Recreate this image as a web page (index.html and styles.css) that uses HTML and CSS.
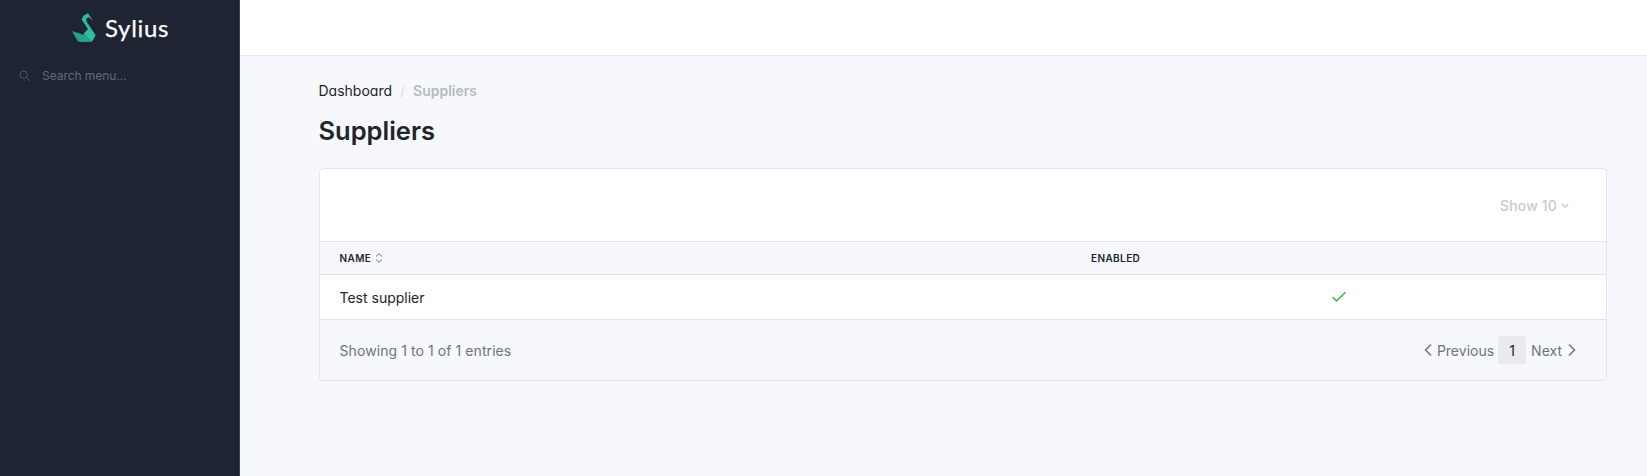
FILE: index.html
```
<!DOCTYPE html>
<html lang="en">
<head>
<meta charset="utf-8">
<title>Suppliers</title>
<link rel="stylesheet" href="styles.css">
</head>
<body>
<div class="page">
  <aside class="sidebar">
    <a class="logo">
      <svg class="swan" width="25" height="30" viewBox="36 25 75 90">
        <path fill="#2fbd9c" d="M65 45L70 33L84 26L99 49L86 37L78 43L80 51L107 92L96 111L70 88L84 73Z"/>
        <path fill="#25997f" d="M36 79L70 90L96 111H55L45 97Z"/>
        <path fill="#20a987" d="M45 84L76 93L96 111H62Z"/>
      </svg>
      <span class="brand">Sylius</span>
    </a>
    <div class="search">
      <svg width="12" height="12" viewBox="0 0 12 12" fill="none" stroke="currentColor"><circle cx="4.7" cy="4.7" r="3.7"/><path d="M7.5 7.5L11 11"/></svg>
      <span>Search menu...</span>
    </div>
  </aside>
  <div class="main">
    <header class="topbar"></header>
    <main class="content">
      <nav class="breadcrumb"><span>Dashboard</span><span class="slash">/</span><span class="current">Suppliers</span></nav>
      <h1 class="title">Suppliers</h1>
      <section class="card">
        <div class="toolbar"><span>Show 10</span><svg width="8" height="6" viewBox="0 0 8 6" fill="none" stroke="currentColor" stroke-width="1.3"><path d="M.8 1L4 4.2L7.2 1"/></svg></div>
        <div class="row head">
          <div class="name">Name <svg width="8" height="10" viewBox="0 0 8 10" fill="none" stroke="currentColor"><path d="M1 3.5L4 .7L7 3.5M1 6.5L4 9.3L7 6.5"/></svg></div>
          <div>Enabled</div>
        </div>
        <div class="row item">
          <div>Test supplier</div>
          <div class="check"><svg width="16" height="12" viewBox="0 0 16 12" fill="none" stroke="currentColor" stroke-width="1.3"><path d="M1.5 6L5.5 10L14.5 1.3"/></svg></div>
        </div>
        <footer class="footer">
          <span class="summary">Showing 1 to 1 of 1 entries</span>
          <div class="pager">
            <svg width="8" height="14" viewBox="0 0 8 14" fill="none" stroke="currentColor" stroke-width="1.5"><path d="M7 1.5L1.5 7L7 12.5"/></svg>
            <span class="prev">Previous</span><span class="active">1</span><span class="next">Next</span>
            <svg width="8" height="14" viewBox="0 0 8 14" fill="none" stroke="currentColor" stroke-width="1.5"><path d="M1 1.5L6.5 7L1 12.5"/></svg>
          </div>
        </footer>
      </section>
    </main>
  </div>
</div>
</body>
</html>
```
FILE: styles.css
```
* { box-sizing: border-box; }
body {
  margin: 0;
  font: 14px/20px Inter, "Liberation Sans", sans-serif;
  font-feature-settings: "cv03", "cv04", "cv11";
  color: #212529;
  background: #f6f8fc;
}
svg { display: block; flex: none; }
.page { display: flex; height: 476px; overflow: hidden; }
.sidebar {
  width: 240px;
  flex: none;
  background: #1f2433;
  border-right: 1px solid #3b4251;
}
.logo { display: flex; padding: 13px 0 0 72px; height: 56px; }
.brand {
  margin-left: 8px;
  font: 24px/30px Lato, sans-serif;
  letter-spacing: 0.7px;
  color: #fff;
  -webkit-text-stroke: 0.25px #fff;
}
.search {
  display: flex;
  align-items: center;
  gap: 11px;
  height: 40px;
  padding-left: 19px;
  font-size: 12px;
  font-feature-settings: normal;
  letter-spacing: -0.05px;
  color: #646975;
}
.search svg { color: #535866; }
.main { flex: 1; }
.topbar { height: 56px; background: #fff; border-bottom: 1px solid #e6e8ed; }
.content { padding: 25px 40px 0 78.5px; }
.breadcrumb { display: flex; height: 20px; }
.slash { margin: 0 8px; color: #dadfe5; }
.current { font-weight: 600; color: #b3bac2; }
.title { margin: 14px 0 21px; font-size: 25.5px; line-height: 32px; font-weight: 600; }
.card { border: 1px solid #e2e5ec; border-radius: 4px; background: #fff; overflow: hidden; }
.toolbar {
  display: flex;
  align-items: center;
  justify-content: flex-end;
  gap: 4px;
  height: 72px;
  padding: 2px 37px 0 0;
  font-weight: 500;
  letter-spacing: 0.15px;
  color: #c7cacd;
}
.row { display: grid; grid-template-columns: 751.5px 1fr; align-items: center; padding: 0 0 0 20px; }
.head {
  height: 34px;
  border-top: 1px solid #e2e5ec;
  border-bottom: 1px solid #dce0e6;
  background: #f6f8fc;
  font-size: 10px;
  font-weight: 600;
  letter-spacing: 0.4px;
  text-transform: uppercase;
}
.name { display: flex; align-items: center; gap: 4px; }
.name svg { color: #6c7580; }
.item { height: 44px; padding-top: 1px; }
.check { display: flex; justify-content: center; padding: 0 20px 2px 0; color: #2fb344; }
.footer {
  display: flex;
  align-items: center;
  justify-content: space-between;
  height: 61px;
  padding: 0 30px 0 20px;
  border-top: 1px solid #e2e5ec;
  background: #f6f8fc;
  color: #6c757d;
}
.summary { padding-top: 1px; letter-spacing: 0.08px; }
.pager { display: flex; align-items: center; }
.prev { margin: 0 4px 0 5px; padding-top: 1px; }
.active { width: 28px; border-radius: 4px; background: #e8ebef; color: #212529; line-height: 29px; height: 28px; text-align: center; }
.next { margin: 0 6px 0 5px; padding-top: 1px; }
```
